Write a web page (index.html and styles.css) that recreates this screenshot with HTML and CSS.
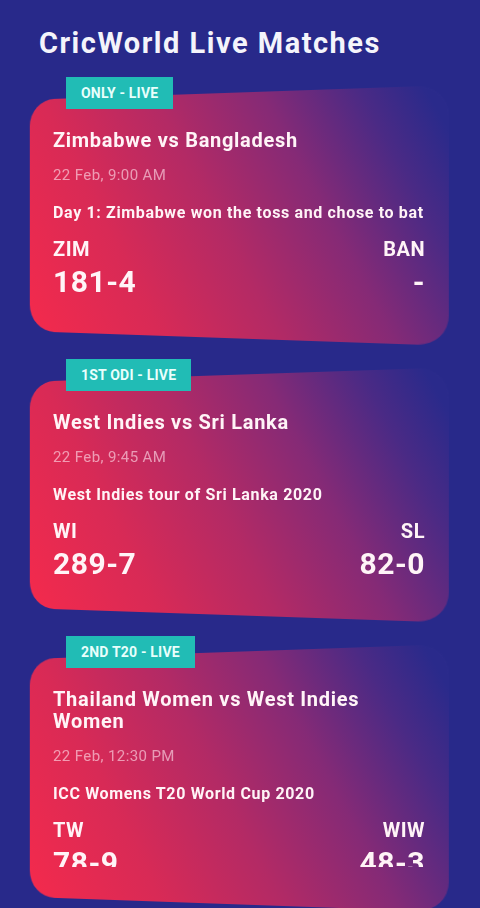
FILE: index.html
```html
<!DOCTYPE html>
<html lang="en">
<head>
<meta charset="utf-8">
<title>CricWorld Live Matches</title>
<link rel="stylesheet" href="styles.css">
</head>
<body>
<main class="page">
  <h1 class="page-title">CricWorld Live Matches</h1>

  <section class="match">
    <span class="badge">ONLY - LIVE</span>
    <div class="card card--one">
      <div class="card-body">
        <h2 class="match-title">Zimbabwe vs Bangladesh</h2>
        <p class="match-date">22 Feb, 9:00 AM</p>
        <p class="match-info">Day 1: Zimbabwe won the toss and chose to bat</p>
        <div class="teams">
          <div class="side">
            <div class="team">ZIM</div>
            <div class="score">181-4</div>
          </div>
          <div class="side side--right">
            <div class="team">BAN</div>
            <div class="score">-</div>
          </div>
        </div>
      </div>
    </div>
  </section>

  <section class="match">
    <span class="badge">1ST ODI - LIVE</span>
    <div class="card card--two">
      <div class="card-body">
        <h2 class="match-title">West Indies vs Sri Lanka</h2>
        <p class="match-date">22 Feb, 9:45 AM</p>
        <p class="match-info">West Indies tour of Sri Lanka 2020</p>
        <div class="teams">
          <div class="side">
            <div class="team">WI</div>
            <div class="score">289-7</div>
          </div>
          <div class="side side--right">
            <div class="team">SL</div>
            <div class="score">82-0</div>
          </div>
        </div>
      </div>
    </div>
  </section>

  <section class="match">
    <span class="badge">2ND T20 - LIVE</span>
    <div class="card card--three">
      <div class="card-body">
        <h2 class="match-title">Thailand Women vs West Indies Women</h2>
        <p class="match-date">22 Feb, 12:30 PM</p>
        <p class="match-info">ICC Womens T20 World Cup 2020</p>
        <div class="teams">
          <div class="side">
            <div class="team">TW</div>
            <div class="score">78-9</div>
          </div>
          <div class="side side--right">
            <div class="team">WIW</div>
            <div class="score">48-3</div>
          </div>
        </div>
      </div>
    </div>
  </section>
</main>
</body>
</html>
```

FILE: styles.css
```css
html, body {
  margin: 0;
  padding: 0;
  overflow: hidden;
}

body {
  background: #28298a;
  font-family: Roboto, "Noto Sans", "Liberation Sans", sans-serif;
  color: #ffffff;
}

.page {
  display: flex;
  flex-direction: column;
  padding: 26px 0 0 30px;
  width: 419px;
}

.page-title {
  margin: 0 0 17px 9px;
  font-size: 29px;
  line-height: 34px;
  font-weight: 700;
  letter-spacing: 1.5px;
  color: #f4f4fb;
  white-space: nowrap;
}

.match {
  display: flex;
  flex-direction: column;
  align-items: flex-start;
  margin-bottom: 28px;
}

.badge {
  position: relative;
  z-index: 1;
  margin-left: 36px;
  padding: 0 15px;
  height: 32px;
  line-height: 32px;
  background: #21bcb5;
  color: #e8fffc;
  font-size: 14px;
  font-weight: 700;
  letter-spacing: 0.2px;
  white-space: nowrap;
}

.card {
  position: relative;
  isolation: isolate;
  align-self: stretch;
  margin-top: -9px;
  padding: 29px 24px 0 23px;
  box-sizing: border-box;
}

.card::before {
  content: "";
  position: absolute;
  top: -7px;
  bottom: -7px;
  left: -17px;
  right: 8px;
  z-index: -1;
  border-radius: 28px;
  background: linear-gradient(62deg, #f42a4c 0%, #d82a56 26%, #b32a65 48%, #852a76 68%, #4a2a85 85%, #2a2a8b 96%);
  transform: perspective(800px) rotateY(-12.7deg);
}

.card--one { height: 231px; }
.card--two { height: 226px; }
.card--three { height: 238px; }

.card-body {
  height: 179px;
  overflow: hidden;
}

.match-title {
  margin: 0;
  font-size: 20px;
  line-height: 22px;
  font-weight: 700;
  letter-spacing: 0.7px;
  color: #fff4f7;
}

.match-date {
  margin: 14px 0 0;
  font-size: 15px;
  line-height: 20px;
  font-weight: 400;
  letter-spacing: 0.4px;
  color: rgba(255, 225, 235, 0.62);
}

.match-info {
  margin: 18px 0 0;
  font-size: 16px;
  line-height: 20px;
  font-weight: 700;
  letter-spacing: 0.65px;
  color: #fff4f7;
}

.teams {
  display: flex;
  justify-content: space-between;
  margin-top: 14px;
}

.side {
  display: flex;
  flex-direction: column;
}

.side--right {
  align-items: flex-end;
}

.team {
  font-size: 20px;
  line-height: 24px;
  font-weight: 700;
  letter-spacing: 0.5px;
  color: #fff4f7;
}

.score {
  margin-top: 4px;
  font-size: 30px;
  line-height: 34px;
  font-weight: 700;
  letter-spacing: 0.5px;
  color: #fff4f7;
}
```
